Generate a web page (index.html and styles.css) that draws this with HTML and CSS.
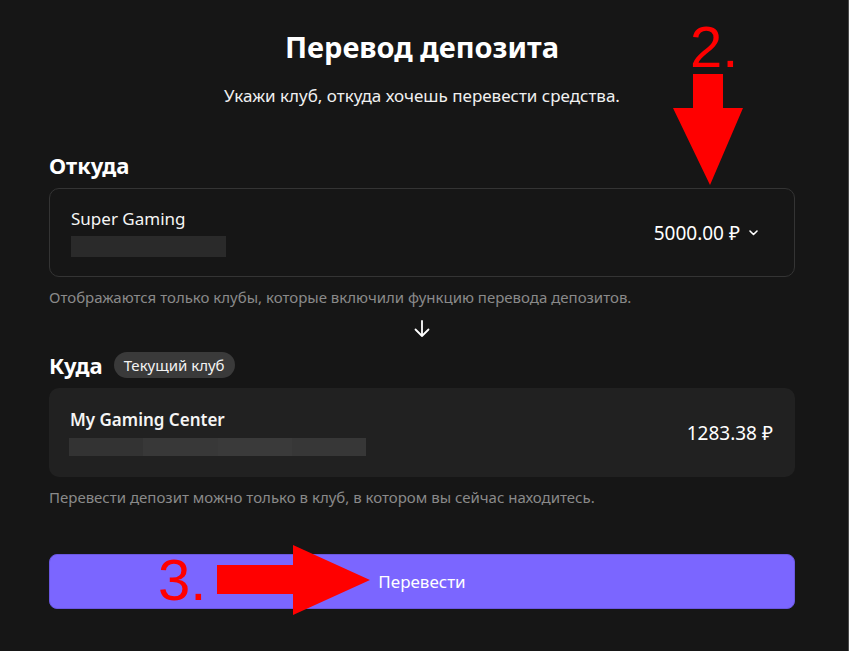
FILE: index.html
```html
<!DOCTYPE html>
<html lang="ru">
<head>
  <meta charset="UTF-8" />
  <meta name="viewport" content="width=device-width, initial-scale=1.0" />
  <title>Перевод депозита</title>
  <link rel="stylesheet" href="styles.css">
</head>
<body>
  <main class="transfer">
    <h1>Перевод депозита</h1>
    <p class="lead">Укажи клуб, откуда хочешь перевести средства.</p>

    <h2 class="section-title">Откуда</h2>
    <div class="club-card club-card--select">
      <div class="club-info">
        <div class="club-name">Super Gaming</div>
        <div class="club-addr"></div>
      </div>
      <div class="club-amount">
        5000.00 ₽
        <svg class="chevron" width="9" height="6" viewBox="0 0 9 6"><path d="M1 1l3.5 3.5L8 1" fill="none" stroke="#fff" stroke-width="1.6" stroke-linecap="round" stroke-linejoin="round"/></svg>
      </div>
    </div>
    <p class="hint">Отображаются только клубы, которые включили функцию перевода депозитов.</p>

    <div class="down-arrow">
      <svg width="20" height="20" viewBox="0 0 20 20"><path d="M10 2v15M3.5 10.5L10 17l6.5-6.5" fill="none" stroke="#fff" stroke-width="1.8" stroke-linecap="round" stroke-linejoin="round"/></svg>
    </div>

    <div class="section-row">
      <h2 class="section-title">Куда</h2>
      <span class="badge">Текущий клуб</span>
    </div>
    <div class="club-card club-card--current">
      <div class="club-info">
        <div class="club-name club-name--bold">My Gaming Center</div>
        <div class="club-addr club-addr--blur">
          <span></span><span></span><span></span><span></span>
        </div>
      </div>
      <div class="club-amount">1283.38 ₽</div>
    </div>
    <p class="hint">Перевести депозит можно только в клуб, в котором вы сейчас находитесь.</p>

    <button class="submit">Перевести</button>
  </main>

  <svg class="marks" width="849" height="651" viewBox="0 0 849 651">
    <text x="690" y="67" class="mark-text">2.</text>
    <polygon points="693,74 723,74 723,108 743,108 710,185 673,108 693,108" fill="#ff0000"/>
    <text x="158" y="600" class="mark-text">3.</text>
    <polygon points="217,565 293,565 293,545 370,580 293,615 293,594 217,594" fill="#ff0000"/>
  </svg>
</body>
</html>
```

FILE: styles.css
```css
html, body { margin: 0; height: 100%; }
body {
  background: #161616;
  color: #fff;
  font-family: "Noto Sans", "Open Sans", sans-serif;
  border-right: 1px solid #4a4a4a;
  box-sizing: border-box;
  position: relative;
  overflow: hidden;
}
.transfer {
  width: 746px;
  margin-left: 49px;
  padding-top: 31px;
}
h1 {
  margin: 0;
  text-align: center;
  font-size: 29px;
  line-height: 32px;
  font-weight: 700;
}
.lead {
  margin: 22px 0 0;
  text-align: center;
  font-size: 17px;
  line-height: 22px;
  color: #f0f0f0;
}
.section-title {
  margin: 45px 0 10px;
  font-size: 22px;
  line-height: 26px;
  font-weight: 700;
}
.section-row {
  display: flex;
  align-items: center;
  gap: 11px;
  margin-top: 13px;
  margin-bottom: 10px;
}
.section-row .section-title { margin: 0; }
.badge {
  background: #3a3a3a;
  color: #f2f2f2;
  font-size: 15px;
  line-height: 26px;
  padding: 0 10px;
  border-radius: 13px;
}
.club-card {
  box-sizing: border-box;
  height: 89px;
  border-radius: 10px;
  display: flex;
  align-items: center;
  justify-content: space-between;
  padding: 0 21px;
}
.club-card--select {
  border: 1px solid #343434;
  padding-right: 36px;
}
.club-card--current {
  background: #212121;
  padding-right: 22px;
}
.club-name {
  font-size: 17px;
  line-height: 22px;
  color: #f5f5f5;
}
.club-name--bold { font-weight: 600; }
.club-addr {
  margin-top: 6px;
  width: 155px;
  height: 21px;
  background: #2a2a2a;
}
.club-addr--blur {
  display: flex;
  width: 297px;
  height: 18px;
  margin-top: 7px;
  margin-left: -1px;
  background: none;
}
.club-addr--blur span { flex: 1; background: #333; }
.club-addr--blur span:nth-child(2) { background: #383838; }
.club-addr--blur span:nth-child(3) { background: #3a3a3a; }
.club-addr--blur span:nth-child(4) { background: #373737; }
.club-amount {
  font-size: 19px;
  font-weight: 400;
  display: flex;
  align-items: center;
}
.chevron { margin-left: 9px; }
.hint {
  margin: 10px 0 0;
  font-size: 15px;
  line-height: 20px;
  color: #8a8a8a;
}
.down-arrow {
  display: flex;
  justify-content: center;
  margin-top: 12px;
  height: 20px;
}
.submit {
  display: block;
  width: 100%;
  height: 55px;
  margin-top: 47px;
  background: #7b66ff;
  color: #fff;
  border: 1px solid #6a57e0;
  border-radius: 8px;
  font-family: inherit;
  font-size: 17px;
  font-weight: 400;
  cursor: pointer;
}
.marks {
  position: absolute;
  left: 0;
  top: 0;
  pointer-events: none;
}
.mark-text {
  font-family: "Liberation Sans", sans-serif;
  font-size: 58px;
  fill: #ff0000;
}
```
